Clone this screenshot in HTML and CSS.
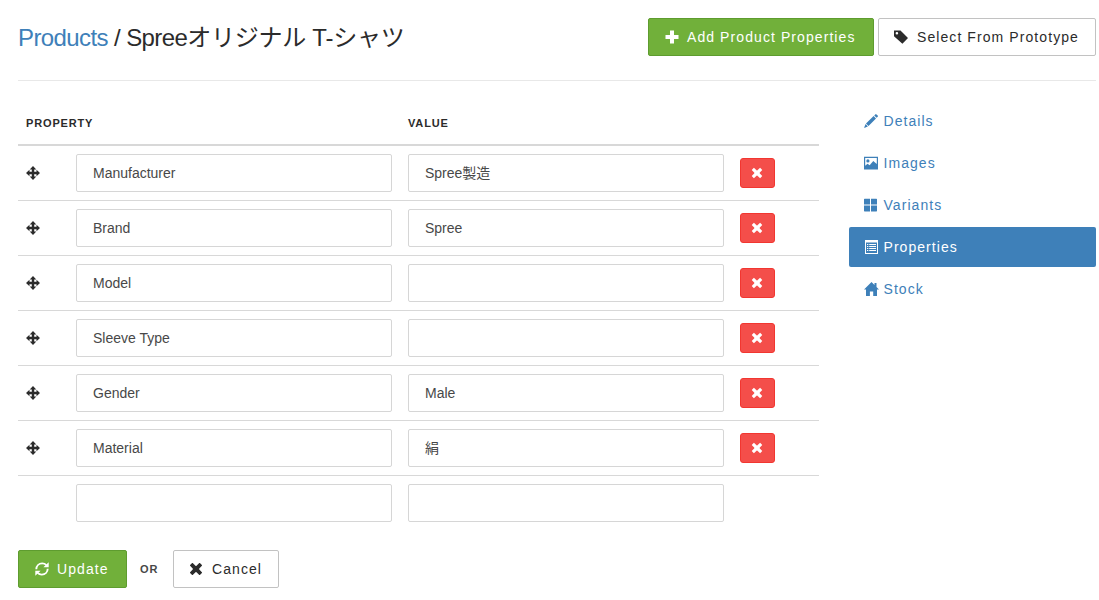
FILE: index.html
```html
<!DOCTYPE html>
<html lang="en">
<head>
<meta charset="utf-8">
<title>Product Properties</title>
<link rel="stylesheet" href="styles.css">
</head>
<body>
<svg class="sprite" aria-hidden="true">
  <symbol id="plus" viewBox="0 0 14 14"><path d="M5 .5h4v4.500h4.500v4H9v4.500H5V9H.5V5H5z"/></symbol>
  <symbol id="tag" viewBox="0 0 14 14"><path fill-rule="evenodd" d="M0 .4h6.500L14 8l-5.600 5.700L0 6.200zM2.900 1.900a1.300 1.300 0 1 0 0 2.600 1.300 1.300 0 0 0 0-2.600z"/></symbol>
  <symbol id="move" viewBox="0 0 14 14"><path d="M7 0l3.300 3.500H8.200v2.300h2.300V3.700L14 7l-3.500 3.300V8.200H8.200v2.300h2.100L7 14l-3.300-3.500h2.100V8.200H3.500v2.100L0 7l3.500-3.300v2.100h2.300V3.500H3.700z"/></symbol>
  <symbol id="remove" viewBox="0 0 14 14"><path d="M3.700 1.100L6.500 3.700q.5.500 1 0l2.800-2.600q.3-.3.600 0l2 2q.3.300 0 .6L10.300 6.500q-.5.500 0 1l2.600 2.800q.3.300 0 .6l-2 2q-.3.300-.6 0L7.500 10.300q-.5-.5-1 0l-2.800 2.600q-.3.300-.6 0l-2-2q-.3-.3 0-.6L3.700 7.500q.5-.5 0-1L1.100 3.700q-.3-.3 0-.6l2-2q.3-.3.600 0z"/></symbol>
  <symbol id="pencil" viewBox="0 0 14 14"><path d="M10.200 1.500L11.300.4q.6-.6 1.200 0l1.200 1.200q.5.500 0 1.100l-1.100 1.100zM9.600 2.100l2.400 2.400-7.500 7.500-2.500-2.500zM1.600 10.100l2.300 2.300L0 14z"/></symbol>
  <symbol id="picture" viewBox="0 0 14 14"><path fill-rule="evenodd" d="M0 .8h14v12.700H0zM1.200 2v7.800L3.500 7.700l2.200 1.500L6.700 8 9.300 5l1.700 1.500 1.800 1.600V2zM3.900 3.300a1.600 1.600 0 1 1 0 3.200 1.600 1.600 0 0 1 0-3.200z"/></symbol>
  <symbol id="grid" viewBox="0 0 14 14"><path d="M.5.8H6v5.700H0V1.300zM7 .8h5.500l.5.500v5.200H7zM0 7.600h6v5.800H.5l-.5-.5zM7 7.600h6v5.300l-.5.500H7z"/></symbol>
  <symbol id="list" viewBox="0 0 14 14"><path fill-rule="evenodd" d="M1 0h13v14H1zM2 2.500V13h11V2.500z"/><path d="M3 4h1.300v1H3zM5.200 4H12v1H5.200zM3 6h1.300v1H3zM5.200 6H12v1H5.200zM3 8h1.300v1H3zM5.200 8H12v1H5.200zM3 10h1.300v1H3zM5.200 10H12v1H5.200z"/></symbol>
  <symbol id="home" viewBox="0 0 15 14"><path d="M7.500 0L10.500 3V1h2v4L15 7.500h-2V14H9.200V9.500H5.900V14H2V7.500H0z"/></symbol>
  <symbol id="refresh" viewBox="0 0 14 14"><path d="M1.300 7.200C1.400 3.900 3.800 1.400 7.200 1.400c1.800 0 3 .5 4.100 1.700M12.700 6.800c-.1 3.300-2.500 5.800-5.900 5.800-1.800 0-3-.5-4.100-1.700" fill="none" stroke="currentColor" stroke-width="1.900"/><path d="M13.700.300V5.300H8.400zM.3 13.700V8.700H5.600z"/></symbol>
</svg>
<header class="page-header">
  <h1 class="page-title"><a class="link">Products</a> / Spree<span class="name-ja">オリジナル T-シャツ</span></h1>
  <div class="page-actions">
    <button class="btn btn-success btn-add"><svg class="icon"><use href="#plus"/></svg>Add Product Properties</button>
    <button class="btn btn-prototype"><svg class="icon"><use href="#tag"/></svg>Select From Prototype</button>
  </div>
</header>
<div class="layout">
  <main class="main">
    <div class="row head"><span class="head-property">Property</span><span>Value</span></div>
    <div class="row"><svg class="icon"><use href="#move"/></svg><input class="field" value="Manufacturer"><input class="field field-ja" value="Spree製造"><button class="delete"><svg class="icon"><use href="#remove"/></svg></button></div>
    <div class="row"><svg class="icon"><use href="#move"/></svg><input class="field" value="Brand"><input class="field" value="Spree"><button class="delete"><svg class="icon"><use href="#remove"/></svg></button></div>
    <div class="row"><svg class="icon"><use href="#move"/></svg><input class="field" value="Model"><input class="field"><button class="delete"><svg class="icon"><use href="#remove"/></svg></button></div>
    <div class="row"><svg class="icon"><use href="#move"/></svg><input class="field" value="Sleeve Type"><input class="field"><button class="delete"><svg class="icon"><use href="#remove"/></svg></button></div>
    <div class="row"><svg class="icon"><use href="#move"/></svg><input class="field" value="Gender"><input class="field" value="Male"><button class="delete"><svg class="icon"><use href="#remove"/></svg></button></div>
    <div class="row"><svg class="icon"><use href="#move"/></svg><input class="field" value="Material"><input class="field field-ja" value="絹"><button class="delete"><svg class="icon"><use href="#remove"/></svg></button></div>
    <div class="row row-new"><span></span><input class="field"><input class="field"></div>
    <div class="form-actions">
      <button class="btn btn-success btn-update"><svg class="icon"><use href="#refresh"/></svg>Update</button>
      <span class="or">OR</span>
      <button class="btn btn-cancel"><svg class="icon"><use href="#remove"/></svg>Cancel</button>
    </div>
  </main>
  <nav class="sidebar">
    <a class="nav-item"><svg class="icon"><use href="#pencil"/></svg>Details</a>
    <a class="nav-item"><svg class="icon"><use href="#picture"/></svg>Images</a>
    <a class="nav-item"><svg class="icon"><use href="#grid"/></svg>Variants</a>
    <a class="nav-item active"><svg class="icon"><use href="#list"/></svg>Properties</a>
    <a class="nav-item"><svg class="icon icon-home"><use href="#home"/></svg>Stock</a>
  </nav>
</div>
</body>
</html>
```
FILE: styles.css
```css
* { box-sizing: border-box; }
body {
  margin: 0;
  padding: 18px 3px 0 18px;
  background: #fff;
  color: #2b2b2b;
  font: 14px/20px "Liberation Sans", "Noto Sans CJK JP", sans-serif;
}
.sprite { display: none; }
.icon { width: 14px; height: 14px; fill: currentColor; flex: none; }
.page-header {
  display: flex;
  justify-content: space-between;
  height: 63px;
  border-bottom: 1px solid #e8e8e8;
}
.page-title {
  margin: 0;
  padding-top: 1px;
  font-size: 24px;
  line-height: 38px;
  font-weight: 400;
  letter-spacing: -.6px;
}
.name-ja { letter-spacing: -.25px; }
.link { color: #3e80b9; }
.page-actions { display: flex; gap: 4px; }
.btn {
  display: flex;
  align-items: center;
  gap: 9px;
  height: 38px;
  margin: 0;
  padding: 0 0 0 15px;
  border: 1px solid #c2c2c2;
  border-radius: 2px;
  background: #fff;
  color: #2b2b2b;
  font: inherit;
  letter-spacing: 1.08px;
  white-space: nowrap;
}
.btn-success { border-color: #5e9c2f; background: #71b03a; color: #fff; }
.btn-add { width: 226px; padding-left: 16px; gap: 8px; }
.btn-prototype { width: 218px; }
.btn-update { width: 109px; padding-left: 16px; gap: 8px; }
.btn-cancel { width: 106px; }
.layout { display: flex; gap: 30px; padding-top: 20px; }
.main { width: 801px; }
.row {
  display: grid;
  grid-template-columns: 34px 316px 316px 35px;
  column-gap: 16px;
  align-items: center;
  height: 55px;
  padding-left: 8px;
  border-bottom: 1px solid #d8d8d8;
}
.head {
  height: 45px;
  border-bottom-width: 2px;
  font-size: 11px;
  font-weight: 700;
  letter-spacing: .85px;
  text-transform: uppercase;
}
.head-property { grid-column: span 2; }
.row-new { border-bottom: 0; height: 54px; }
.field {
  width: 100%;
  height: 38px;
  padding: 0 16px;
  border: 1px solid #d6d6d6;
  border-radius: 2px;
  background: #fff;
  color: #484848;
  font: inherit;
}
.field-ja { padding-bottom: 2px; }
.delete {
  display: flex;
  align-items: center;
  justify-content: center;
  height: 30px;
  padding: 0 1px 0 0;
  border: 1px solid #f23630;
  border-radius: 3px;
  background: #f44e4a;
  color: #fff;
}
.delete .icon { width: 12px; height: 12px; }
.form-actions { display: flex; align-items: center; padding-top: 20px; }
.or {
  width: 46px;
  padding-left: 13px;
  color: #484848;
  font-size: 11px;
  font-weight: 700;
  letter-spacing: 1px;
}
.sidebar { display: flex; flex-direction: column; gap: 2px; width: 247px; }
.nav-item {
  display: flex;
  align-items: center;
  gap: 5.500px;
  height: 40px;
  padding-left: 15px;
  border-radius: 2px;
  color: #3e80b9;
  letter-spacing: 1.05px;
}
.active { background: #3e80b9; color: #fff; }
.icon-home { width: 15px; margin-right: -1px; }
```
